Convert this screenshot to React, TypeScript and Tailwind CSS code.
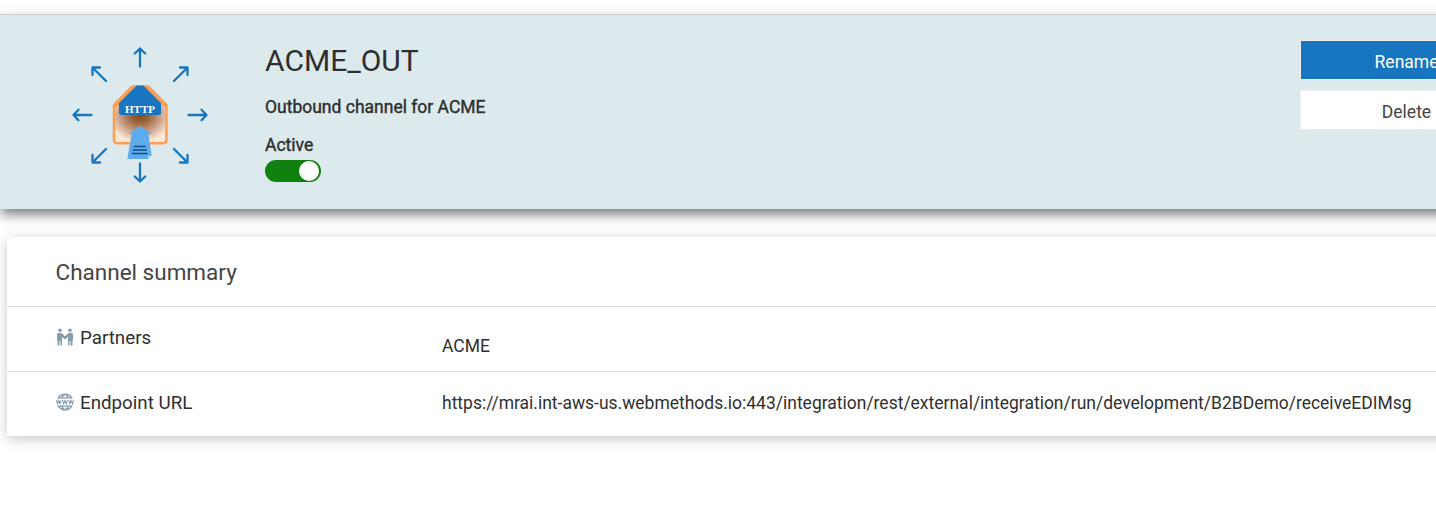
const arrowAngles = [0, 90, 180, 270];

function OutboundHttpIcon() {
  return (
    <svg className="block h-[140px] w-[140px]" viewBox="0 0 140 140" fill="none">
      <defs>
        <radialGradient id="glow" cx="0" cy="0" r="1" gradientTransform="translate(70 70) scale(32 27)" gradientUnits="userSpaceOnUse">
          <stop offset="0" stopColor="#8a4510" />
          <stop offset="0.3" stopColor="#9c663e" />
          <stop offset="0.7" stopColor="#d0ac94" />
          <stop offset="1" stopColor="#fde8d8" />
        </radialGradient>
      </defs>
      {arrowAngles.map((a) => (
        <g
          key={a}
          transform={`rotate(${a} 70 70)`}
          stroke="#1776bf"
          strokeWidth="2.3"
          strokeLinecap="round"
          strokeLinejoin="round"
        >
          <path d="M70 21.500V3.500M64.800 8.500 70 3.500l5.200 5" />
          <path d="M104 36 117.500 22.500M110 22.500h7.500V30" />
        </g>
      ))}
      <path d="M44 60 62.300 41.500h15.900L96.400 60v35.300a3 3 0 0 1-3 3H47a3 3 0 0 1-3-3Z" fill="#ff9f55" stroke="#ff9f55" strokeWidth="2.600" strokeLinejoin="round" />
      <path d="M45.300 62 49.500 59.500H91L95.100 62v33a2 2 0 0 1-2 2H47.300a2 2 0 0 1-2-2Z" fill="url(#glow)" />
      <path d="M66.700 40.500h6.600L91 58v9.500a2.500 2.500 0 0 1-2.500 2.500h-37a2.500 2.500 0 0 1-2.500-2.500V58Z" fill="#1776bf" />
      <text x="55" y="68" fill="#fff" className="font-['Liberation_Serif'] text-[11px] font-bold">HTTP</text>
      <path d="M70 81 82 88.700h-3.700L81.700 110.700l-3.300 3.300H57.300L61.700 88.700h-3.400Z" fill="#5dabeb" />
      <path d="m78.400 110.700 3.300 0-3.300 3.300Z" fill="#cfe3f3" />
      <path d="M63.700 101.500h12M62.800 105h14M61.800 108.500h15.800" stroke="#0d4f85" strokeWidth="1.300" />
    </svg>
  );
}

function PartnersIcon() {
  return (
    <svg className="-mt-0.5 h-[18px] w-[18px]" viewBox="0 0 18 18" fill="#849eac">
      <circle cx="4" cy="2.300" r="1.800" />
      <circle cx="14" cy="2.300" r="1.800" />
      <path d="M2.500 5h3L9 8.200 12.500 5h3q1.500 0 1.500 1.500V12.500h-.5V17.500h-2V13h-1v4.500H12V9L9.700 11H8.300L6 9v8.500H4.500V13h-1v4.500H1.500v-5H1v-6Q1 5 2.500 5Z" />
    </svg>
  );
}

function WebIcon() {
  return (
    <svg className="-mt-0.5 h-[18px] w-[18px]" viewBox="0 0 18 18" fill="none" stroke="#849eac" strokeWidth="1.400">
      <path d="M2.300 4.900a7.700 7.500 0 0 1 13.400 0ZM2.300 13.100a7.700 7.500 0 0 0 13.400 0ZM5.800 4.900Q7 1.400 9 1.200q2 .2 3.200 3.700M5.800 13.100Q7 16.600 9 16.800q2-.2 3.200-3.700" />
      <path d="M.4 7.200 1.500 10.600 2.800 7.500 4.100 10.600 5.200 7.200M6.600 7.200 7.700 10.600 9 7.500 10.300 10.600 11.400 7.200M12.800 7.200 13.900 10.600 15.200 7.500 16.500 10.600 17.600 7.200" strokeWidth="1.100" />
    </svg>
  );
}

export default function App() {
  return (
    <div className="h-[509px] w-full overflow-hidden bg-white pt-3.5 font-['Roboto',sans-serif] text-[#2f2f2f]">
      <header className="relative mr-[-75px] flex h-[195px] border-t border-[#c9cfd1] bg-[#dceaed] shadow-[0_6px_12px_-1px_rgba(0,0,0,0.55)]">
        <div className="ml-[70px] pt-[30px]">
          <OutboundHttpIcon />
        </div>
        <div className="ml-[55px] flex flex-col pt-[27px]">
          <h1 className="text-[30px] leading-[38px] font-normal">ACME_OUT</h1>
          <p className="mt-[15px] text-[17.500px] leading-6 [-webkit-text-stroke:0.4px_#2f2f2f]">Outbound channel for ACME</p>
          <span className="mt-[14px] text-[17.500px] leading-6 [-webkit-text-stroke:0.4px_#2f2f2f]">Active</span>
          <button
            role="switch"
            aria-checked="true"
            aria-label="Active"
            className="mt-[3px] flex h-[22px] w-14 items-center justify-end rounded-full bg-[#10810f] pr-[2.500px]"
          >
            <span className="size-5 rounded-full bg-white" />
          </button>
        </div>
        <div className="ml-auto flex w-[211px] shrink-0 flex-col gap-2.5 pt-[25px] text-center text-[17.500px]">
          <button className="h-10 border border-[#eeeeee] bg-[#1776bf] pt-1 pl-0.5 text-white">Rename</button>
          <button className="h-10 border border-[#eeeeee] bg-white pt-1 pl-0.5 text-[#444]">Delete</button>
        </div>
      </header>
      <section className="mt-7 mr-[-20px] ml-[7px] h-[199px] bg-white shadow-[0_3px_12px_rgba(0,0,0,0.22)]">
        <h2 className="h-[69px] pl-[48.500px] text-[22.500px] leading-[71px] text-[#444]">Channel summary</h2>
        <div className="flex h-[65px] border-t border-[#dcdcdc] pl-[49px]">
          <div className="flex h-[62px] w-[386px] items-center gap-[6px] text-[18.750px]">
            <PartnersIcon />
            <span>Partners</span>
          </div>
          <span className="pt-[27px] text-[17.500px] leading-6">ACME</span>
        </div>
        <div className="flex h-[65px] border-t border-[#dcdcdc] pl-[49px]">
          <div className="flex h-[62px] w-[386px] items-center gap-[6px] text-[18.750px]">
            <WebIcon />
            <span>Endpoint URL</span>
          </div>
          <span className="pt-[19px] text-[17.490px] leading-6 whitespace-nowrap">
            https://mrai.int-aws-us.webmethods.io:443/integration/rest/external/integration/run/development/B2BDemo/receiveEDIMsg
          </span>
        </div>
      </section>
    </div>
  );
}
